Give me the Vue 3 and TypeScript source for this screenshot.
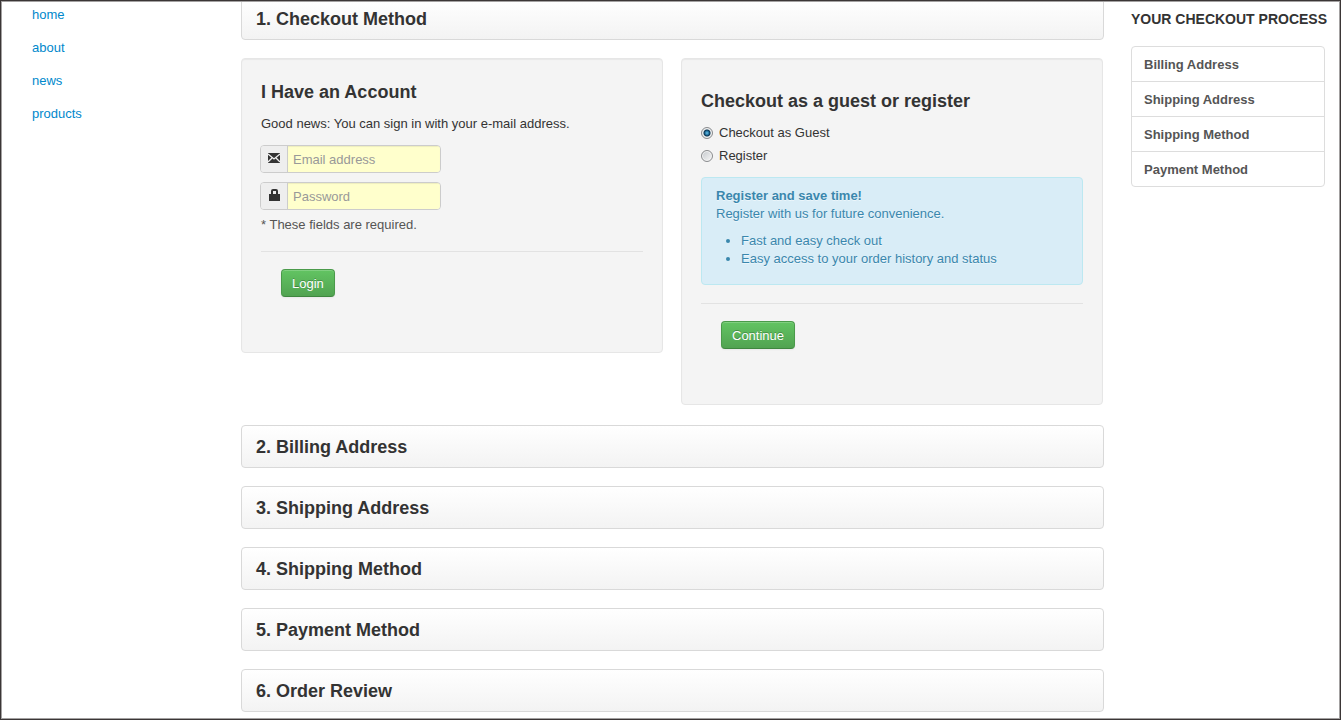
<script setup lang="ts">
import { ref } from 'vue'

const links: string[] = ['home', 'about', 'news', 'products']
const laterSteps: string[] = [
  '2. Billing Address',
  '3. Shipping Address',
  '4. Shipping Method',
  '5. Payment Method',
  '6. Order Review',
]
const progress: string[] = ['Billing Address', 'Shipping Address', 'Shipping Method', 'Payment Method']

const email = ref('')
const password = ref('')
const method = ref<'guest' | 'register'>('guest')
</script>

<template>
  <div class="page">
    <nav class="site-nav" aria-label="Site">
      <a v-for="link in links" :key="link" href="#">{{ link }}</a>
    </nav>

    <main class="checkout">
      <h3 class="step">1. Checkout Method</h3>

      <div class="methods">
        <form class="well" @submit.prevent>
          <h3>I Have an Account</h3>
          <p class="intro">Good news: You can sign in with your e-mail address.</p>
          <div class="field">
            <label class="addon" for="email" aria-label="Email address">
              <svg width="14" height="14" viewBox="0 0 14 14">
                <path d="M1 1h12v10H1z" fill="#333" />
                <path d="M1 2l6 5 6-5M1 10l4-4M13 10L9 6" fill="none" stroke="#eee" stroke-width="1.3" />
              </svg>
            </label>
            <input id="email" v-model="email" type="email" placeholder="Email address" />
          </div>
          <div class="field">
            <label class="addon" for="password" aria-label="Password">
              <svg width="14" height="14" viewBox="0 0 14 14">
                <path d="M5 6V2q0-1 1-1h3q1 0 1 1v4" fill="none" stroke="#333" stroke-width="2" />
                <path d="M2 5h11v7H2z" fill="#333" />
              </svg>
            </label>
            <input id="password" v-model="password" type="password" placeholder="Password" />
          </div>
          <p class="required">* These fields are required.</p>
          <div class="actions"><button type="submit">Login</button></div>
        </form>

        <form class="well guest" @submit.prevent>
          <h3>Checkout as a guest or register</h3>
          <label class="choice"><input v-model="method" type="radio" name="method" value="guest" />Checkout as Guest</label>
          <label class="choice"><input v-model="method" type="radio" name="method" value="register" />Register</label>
          <div class="info">
            <strong>Register and save time!</strong>
            <p>Register with us for future convenience.</p>
            <ul>
              <li>Fast and easy check out</li>
              <li>Easy access to your order history and status</li>
            </ul>
          </div>
          <div class="actions"><button type="submit">Continue</button></div>
        </form>
      </div>

      <h3 v-for="step in laterSteps" :key="step" class="step">{{ step }}</h3>
    </main>

    <aside class="progress">
      <h4>YOUR CHECKOUT PROCESS</h4>
      <ul>
        <li v-for="item in progress" :key="item">{{ item }}</li>
      </ul>
    </aside>
  </div>
</template>

<style>
body {
  margin: 0;
  background: #fff;
}
</style>

<style scoped>
* {
  box-sizing: border-box;
}
.page {
  display: grid;
  grid-template-columns: 182px minmax(0, 1fr) 194px;
  column-gap: 27px;
  height: 100vh;
  padding: 1px 15px 1px 31px;
  overflow: hidden;
  border: 1px solid #3b3636;
  box-shadow: inset 0 0 0 1px #a3a1a1;
  font: 13px/18px "Liberation Sans", Arial, sans-serif;
  color: #333;
}
h3,
h4,
p,
ul {
  margin: 0;
}
h3 {
  font-size: 18px;
  line-height: 27px;
}
.site-nav {
  display: flex;
  flex-direction: column;
  align-items: flex-start;
  gap: 15px;
  padding-top: 4px;
}
.site-nav a {
  color: #08c;
  text-decoration: none;
}
.checkout {
  min-height: 0;
  overflow: hidden;
}
.step {
  height: 43px;
  margin-bottom: 18px;
  padding: 8px 14px 6px;
  border: 1px solid #d9d9d9;
  border-radius: 4px;
  background: linear-gradient(#fff, #f3f3f3);
}
.step:first-child {
  margin-top: -5px;
}
.methods {
  display: grid;
  grid-template-columns: 1fr 1fr;
  align-items: start;
  gap: 18px;
  padding-right: 1px;
  margin-bottom: 20px;
}
.well {
  padding: 20px 19px 19px;
  border: 1px solid #e6e6e6;
  border-radius: 4px;
  background: #f4f4f4;
  box-shadow: inset 0 1px 1px rgba(0, 0, 0, 0.05);
}
.guest {
  padding-top: 29px;
}
.intro {
  margin: 9px 0 12px;
}
.field {
  display: flex;
  width: 181px;
  height: 28px;
  margin: 0 0 9px -1px;
  border: 1px solid #ccc;
  border-radius: 4px;
  overflow: hidden;
}
.addon {
  display: flex;
  align-items: center;
  justify-content: center;
  width: 27px;
  border-right: 1px solid #ccc;
  background: #eee;
}
.field input {
  flex: 1;
  min-width: 0;
  padding: 2px 5px 0;
  border: 0;
  outline: 0;
  background: #ffc;
  box-shadow: inset 0 1px 1px rgba(0, 0, 0, 0.07);
  font: inherit;
  color: #555;
}
.field input::placeholder {
  color: #999;
  opacity: 1;
}
.required {
  margin: -3px 0 17px;
  color: #555;
}
.actions {
  margin-bottom: 18px;
  padding: 17px 20px 18px;
  border-top: 1px solid #e2e2e2;
}
button {
  display: block;
  height: 28px;
  padding: 2px 10px 0;
  border: 1px solid #4a9a4a;
  border-bottom-color: #3f863f;
  border-radius: 4px;
  background: linear-gradient(#62c462, #51a351);
  box-shadow: inset 0 1px 0 rgba(255, 255, 255, 0.2), 0 1px 2px rgba(0, 0, 0, 0.05);
  font: inherit;
  color: #fff;
  text-shadow: 0 -1px 0 rgba(0, 0, 0, 0.25);
}
.choice {
  display: flex;
  align-items: center;
  gap: 6px;
  margin-bottom: 5px;
}
.guest h3 {
  margin-bottom: 9px;
}
.choice input {
  appearance: none;
  width: 12px;
  height: 12px;
  margin: 0;
  border: 1px solid #8a8c8e;
  border-radius: 50%;
  background: linear-gradient(135deg, #c4c8cc, #f8f8f8);
  box-shadow: inset 0 0 0 1px #f4f4f4;
}
.choice input:checked {
  background: radial-gradient(circle at 5px 5px, #6cc5ea 0, #1e6d9c 2px, #0d3550 3px, transparent 4px), #d5dce0;
}
.info {
  margin: 12px 0 18px;
  padding: 9px 14px 7px;
  border: 1px solid #bce8f1;
  border-radius: 4px;
  background: #d9edf7;
  color: #3a87ad;
  text-shadow: 0 1px 0 rgba(255, 255, 255, 0.5);
}
.info strong {
  display: block;
}
.info ul {
  margin: 9px 0 9px 25px;
  padding: 0;
}
.progress h4 {
  margin: 8px 0 18px;
  font-size: 14px;
  line-height: 18px;
  white-space: nowrap;
}
.progress ul {
  padding: 0;
  border: 1px solid #ddd;
  border-radius: 4px;
  list-style: none;
}
.progress li {
  padding: 9px 12px 7px;
  font-weight: bold;
  color: #555;
}
.progress li + li {
  border-top: 1px solid #ddd;
}
</style>
